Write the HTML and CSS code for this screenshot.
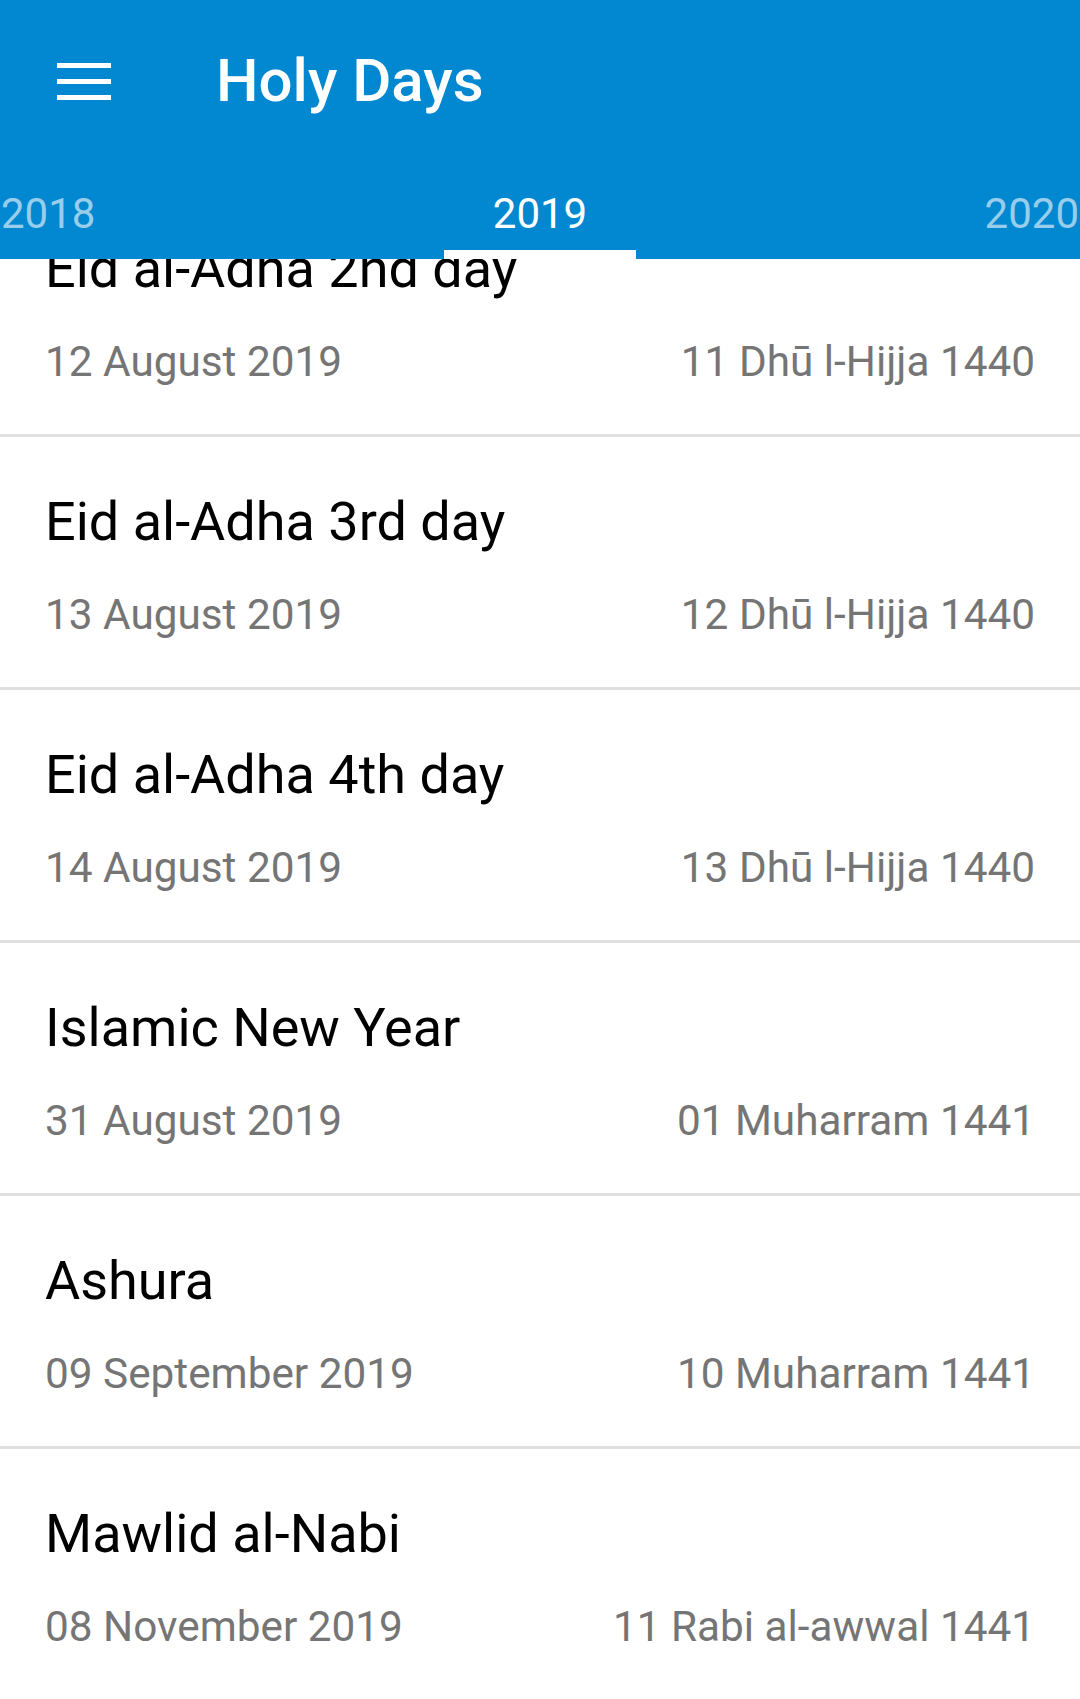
FILE: index.html
```html
<!DOCTYPE html>
<html lang="en">
<head>
<meta charset="utf-8">
<title>Holy Days</title>
<link rel="stylesheet" href="styles.css">
</head>
<body>
<header class="appbar">
  <div class="toolbar">
    <svg class="menu" width="54" height="37" viewBox="0 0 54 37" aria-hidden="true">
      <rect x="0" y="0" width="54" height="5" fill="#fff"/>
      <rect x="0" y="16" width="54" height="5" fill="#fff"/>
      <rect x="0" y="32" width="54" height="5" fill="#fff"/>
    </svg>
    <h1 class="title">Holy Days</h1>
  </div>
  <nav class="tabs">
    <span class="tab">2018</span>
    <span class="tab active">2019</span>
    <span class="tab">2020</span>
  </nav>
</header>
<main class="list">
  <ul class="items">
    <li class="item">
      <div class="name">Eid al-Adha 2nd day</div>
      <div class="dates"><span>12 August 2019</span><span>11 Dhū l-Hijja 1440</span></div>
    </li>
    <li class="item">
      <div class="name">Eid al-Adha 3rd day</div>
      <div class="dates"><span>13 August 2019</span><span>12 Dhū l-Hijja 1440</span></div>
    </li>
    <li class="item">
      <div class="name">Eid al-Adha 4th day</div>
      <div class="dates"><span>14 August 2019</span><span>13 Dhū l-Hijja 1440</span></div>
    </li>
    <li class="item">
      <div class="name">Islamic New Year</div>
      <div class="dates"><span>31 August 2019</span><span>01 Muharram 1441</span></div>
    </li>
    <li class="item">
      <div class="name">Ashura</div>
      <div class="dates"><span>09 September 2019</span><span>10 Muharram 1441</span></div>
    </li>
    <li class="item">
      <div class="name">Mawlid al-Nabi</div>
      <div class="dates"><span>08 November 2019</span><span>11 Rabi al-awwal 1441</span></div>
    </li>
  </ul>
</main>
</body>
</html>
```

FILE: styles.css
```css
html, body {
  margin: 0;
  padding: 0;
}
body {
  width: 1080px;
  height: 1699px;
  overflow: hidden;
  background: #ffffff;
  font-family: Roboto, "Noto Sans", "Liberation Sans", sans-serif;
}
.appbar {
  background: #0288d1;
  height: 259px;
  display: flex;
  flex-direction: column;
}
.toolbar {
  height: 160px;
  display: flex;
  align-items: flex-start;
  padding-left: 57px;
}
.menu {
  display: block;
  margin-top: 63px;
  flex: none;
}
.title {
  margin: 46px 0 0 105px;
  font-size: 60px;
  line-height: 70px;
  font-weight: 500;
  color: #ffffff;
}
.tabs {
  height: 99px;
  display: flex;
  justify-content: space-between;
  align-items: flex-end;
  padding: 0 1px 0 1px;
}
.tab {
  font-size: 42px;
  line-height: 50px;
  color: rgba(255, 255, 255, 0.6);
  padding-bottom: 20px;
}
.tab.active {
  color: #ffffff;
  padding: 0 49px 11px;
  border-bottom: 9px solid #ffffff;
}
.list {
  height: 1440px;
  overflow: hidden;
}
.items {
  list-style: none;
  margin: -75px 0 0;
  padding: 0;
}
.item {
  padding: 52px 45px 47px 45px;
  border-bottom: 3px solid #e0e0e0;
}
.name {
  font-size: 54px;
  line-height: 66px;
  color: #000000;
}
.dates {
  display: flex;
  justify-content: space-between;
  margin-top: 35px;
  font-size: 42.3px;
  line-height: 50px;
  color: #757575;
}
```
